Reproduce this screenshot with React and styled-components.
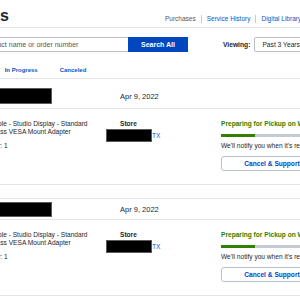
import React from 'react';
import styled, { createGlobalStyle } from 'styled-components';

const GlobalStyle = createGlobalStyle`
  html, body {
    margin: 0;
    padding: 0;
    overflow: hidden;
    background: #fff;
  }
  body {
    font-family: 'Liberation Sans', Arial, sans-serif;
    color: #1d252c;
  }
`;

const Page = styled.div`
  width: 460px;
  margin-left: -120px;
`;

const Header = styled.div`
  display: flex;
  align-items: baseline;
  padding: 8px 0 3px;
  border-bottom: 1px solid #e0e4ea;
`;

const Title = styled.h1`
  width: 237px;
  margin: 0;
  padding-left: 48px;
  font-size: 16px;
  line-height: 16px;
  font-weight: 700;
`;

const Nav = styled.nav`
  display: flex;
  align-items: center;
  font-size: 6.5px;
  line-height: 8px;
  a {
    color: #0457c8;
    text-decoration: none;
    padding-left: 5px;
    margin-left: 5px;
    border-left: 1px solid #c5cbd5;
  }
  span {
    color: #55595c;
  }
`;

const SearchRow = styled.div`
  display: flex;
  align-items: center;
  margin-top: 9px;
  padding-left: 64px;
`;

const SearchInput = styled.input`
  box-sizing: border-box;
  width: 184px;
  height: 15px;
  padding: 0 5px;
  border: 1px solid #b9bec7;
  border-right: none;
  font-family: inherit;
  font-size: 7px;
  outline: none;
  &::placeholder {
    color: #55595c;
  }
`;

const SearchButton = styled.button`
  width: 60px;
  height: 15px;
  border: none;
  background: #0046be;
  color: #fff;
  font-family: inherit;
  font-size: 7px;
  font-weight: 700;
  padding: 0;
`;

const Viewing = styled.label`
  display: flex;
  align-items: center;
  gap: 4px;
  margin-left: 35px;
  font-size: 6.7px;
  font-weight: 700;
`;

const Select = styled.div`
  box-sizing: border-box;
  width: 75px;
  height: 15px;
  padding-left: 7px;
  border: 1px solid #b9bec7;
  border-radius: 2px;
  display: flex;
  align-items: center;
  font-size: 6.7px;
  font-weight: 400;
  color: #1d252c;
`;

const Tabs = styled.div`
  display: flex;
  gap: 22px;
  margin-top: 14px;
  padding: 0 0 4px 95px;
  border-bottom: 1px solid #e0e4ea;
  font-size: 6px;
  line-height: 8px;
  font-weight: 700;
  color: #0457c8;
`;

const Card = styled.section`
  border-bottom: 1px solid #e0e4ea;
  border-top: ${({ $first }) => ($first ? 'none' : '1px solid #e0e4ea')};
  margin-top: ${({ $first }) => ($first ? '0' : '13px')};
`;

const CardHeader = styled.div`
  display: grid;
  grid-template-columns: 116px 115px 1fr;
  align-items: center;
  padding: ${({ $first }) => ($first ? '9px 0 4px 110px' : '3px 0 2px 110px')};
  border-bottom: 1px solid #e0e4ea;
`;

const Redacted = styled.div`
  box-sizing: border-box;
  width: ${({ $w }) => $w}px;
  height: ${({ $h }) => $h}px;
  background: #000;
  border: 1px solid #5a5a5a;
`;

const OrderDate = styled.div`
  padding-left: 14px;
  font-size: 7.5px;
`;

const CardBody = styled.div`
  display: grid;
  grid-template-columns: 116px 115px 102px;
  padding: 11px 0 13px 110px;
  font-size: 6.6px;
  line-height: 8px;
`;

const ItemName = styled.div`
  width: 110px;
`;

const Qty = styled.div`
  margin-top: 6px;
`;

const StoreLabel = styled.div`
  padding-left: 14px;
  font-weight: 700;
`;

const StoreLine = styled.div`
  display: flex;
  align-items: center;
  margin-top: 1px;
  a {
    color: #0457c8;
    text-decoration: none;
  }
`;

const Status = styled.div`
  font-weight: 700;
  color: #318000;
  white-space: nowrap;
`;

const Progress = styled.div`
  width: 120px;
  height: 3px;
  margin-top: 6px;
  background: #c5cbd5;
  div {
    height: 100%;
    background: #318000;
  }
`;

const Notify = styled.div`
  margin-top: 5px;
  white-space: nowrap;
`;

const SupportButton = styled.button`
  width: 102px;
  height: 15px;
  margin-top: 6px;
  border: 1px solid #b4c0d6;
  border-radius: 3px;
  background: #fff;
  color: #0046be;
  font-family: inherit;
  font-size: 6.6px;
  font-weight: 700;
  padding: 0;
`;

const orders = [
  { date: 'Apr 9, 2022', progress: 28 },
  { date: 'Apr 9, 2022', progress: 28 },
];

const Order = ({ order, first }) => (
  <Card $first={first}>
    <CardHeader $first={first}>
      <Redacted $w={62} $h={first ? 16 : 15} />
      <OrderDate>{order.date}</OrderDate>
    </CardHeader>
    <CardBody>
      <div>
        <ItemName>Apple - Studio Display - Standard Glass VESA Mount Adapter</ItemName>
        <Qty>Qty: 1</Qty>
      </div>
      <div>
        <StoreLabel>Store</StoreLabel>
        <StoreLine>
          <Redacted $w={46} $h={13} />
          <a href="#">TX</a>
        </StoreLine>
      </div>
      <div>
        <Status>Preparing for Pickup on Wed</Status>
        <Progress>
          <div style={{ width: `${order.progress}%` }} />
        </Progress>
        <Notify>We'll notify you when it's ready.</Notify>
        <SupportButton>Cancel &amp; Support</SupportButton>
      </div>
    </CardBody>
  </Card>
);

const App = () => (
  <Page>
    <GlobalStyle />
    <Header>
      <Title>Purchases</Title>
      <Nav>
        <span>Purchases</span>
        <a href="#">Service History</a>
        <a href="#">Digital Library</a>
      </Nav>
    </Header>
    <SearchRow>
      <SearchInput placeholder="Search by product name or order number" />
      <SearchButton>Search All</SearchButton>
      <Viewing>
        Viewing:
        <Select>Past 3 Years</Select>
      </Viewing>
    </SearchRow>
    <Tabs>
      <span>All</span>
      <span>In Progress</span>
      <span>Canceled</span>
    </Tabs>
    {orders.map((order, i) => (
      <Order key={i} order={order} first={i === 0} />
    ))}
  </Page>
);

export default App;
